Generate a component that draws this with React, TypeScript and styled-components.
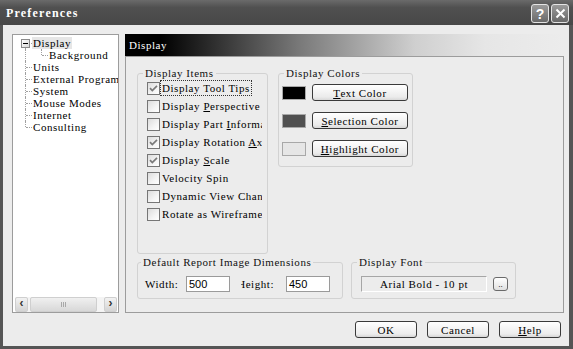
import React from "react";
import styled, { createGlobalStyle } from "styled-components";

const GlobalStyle = createGlobalStyle`
  html, body {
    margin: 0;
    padding: 0;
    background: #ffffff;
  }
  body {
    font-family: "Liberation Serif", "Times New Roman", serif;
    font-size: 11px;
    letter-spacing: 0.55px;
    color: #000;
  }
`;

const Colors = {
  frame: "#555555",
  face: "#ececec",
  groupLine: "#d2d2d2",
  panelLine: "#9c9c9c",
  treeLine: "#a0a0a0",
  buttonLine: "#3a3a3a",
};

interface CheckItem {
  id: string;
  label: React.ReactNode;
  checked?: boolean;
  focused?: boolean;
}

const displayItems: CheckItem[] = [
  { id: "tips", label: "Display Tool Tips", checked: true, focused: true },
  { id: "persp", label: <>Display <u>P</u>erspective</> },
  { id: "part", label: <>Display Part <u>I</u>nformation</> },
  { id: "axis", label: <>Display Rotation <u>A</u>xis</>, checked: true },
  { id: "scale", label: <>Display <u>S</u>cale</>, checked: true },
  { id: "spin", label: "Velocity Spin" },
  { id: "dyn", label: "Dynamic View Changes" },
  { id: "wire", label: "Rotate as Wireframe" },
];

const colorRows = [
  { id: "text", swatch: "#000000", label: <><u>T</u>ext Color</> },
  { id: "sel", swatch: "#505050", label: <><u>S</u>election Color</> },
  { id: "hi", swatch: "#e6e6e6", label: <><u>H</u>ighlight Color</> },
];

type Span = "full" | "first" | "last";

const treeRoots = ["Units", "External Program", "System", "Mouse Modes", "Internet"];

const CheckMark = () => (
  <svg width="11" height="11" viewBox="0 0 11 11">
    <path d="M2 5.2 L4.3 7.6 L9 2.8" fill="none" stroke="#7a7a7a" strokeWidth="1.7" />
  </svg>
);

const CloseGlyph = () => (
  <svg width="11" height="11" viewBox="0 0 11 11">
    <path d="M1.5 1.5 L9.5 9.5 M9.5 1.5 L1.5 9.5" stroke="#fff" strokeWidth="2" />
  </svg>
);

export default function App() {
  return (
    <>
      <GlobalStyle />
      <Window>
        <TitleBar>
          <Title>Preferences</Title>
          <CaptionButtons>
            <CaptionButton>?</CaptionButton>
            <CaptionButton>
              <CloseGlyph />
            </CaptionButton>
          </CaptionButtons>
        </TitleBar>

        <Client>
          <MainRow>
            <TreePanel>
              <TreeList>
                <TreeRow>
                  <Branch $span="last" $from="mid">
                    <Expander />
                  </Branch>
                  <TreeLabel $selected>Display</TreeLabel>
                </TreeRow>
                <TreeRow>
                  <Branch $span="full" $wide $noStub />
                  <Branch $span="first" />
                  <TreeLabel>Background</TreeLabel>
                </TreeRow>
                {treeRoots.map((name) => (
                  <TreeRow key={name}>
                    <Branch $span="full" />
                    <TreeLabel>{name}</TreeLabel>
                  </TreeRow>
                ))}
                <TreeRow>
                  <Branch $span="first" />
                  <TreeLabel>Consulting</TreeLabel>
                </TreeRow>
              </TreeList>
              <HScroll>
                <ScrollArrow>‹</ScrollArrow>
                <ScrollThumb>
                  <Grip />
                </ScrollThumb>
                <ScrollArrow>›</ScrollArrow>
              </HScroll>
            </TreePanel>

            <PagePanel>
              <PageHeader>Display</PageHeader>
              <PageBody>
                <TopGroups>
                  <Group $height={187}>
                    <Legend>Display Items</Legend>
                    <CheckList>
                      {displayItems.map((item) => (
                        <CheckRow key={item.id}>
                          <CheckBox>{item.checked && <CheckMark />}</CheckBox>
                          <CheckLabel $focused={item.focused}>{item.label}</CheckLabel>
                        </CheckRow>
                      ))}
                    </CheckList>
                  </Group>

                  <Group>
                    <Legend>Display Colors</Legend>
                    <ColorList>
                      {colorRows.map((row) => (
                        <ColorRow key={row.id}>
                          <Swatch $color={row.swatch} />
                          <ColorButton>{row.label}</ColorButton>
                        </ColorRow>
                      ))}
                    </ColorList>
                  </Group>
                </TopGroups>

                <BottomGroups>
                  <DimensionsGroup $height={43}>
                    <Legend>Default Report Image Dimensions</Legend>
                    <FieldRow>
                      <WidthLabel>Width:</WidthLabel>
                      <NumberBox>500</NumberBox>
                      <HeightLabel>
                        <span>Height:</span>
                      </HeightLabel>
                      <NumberBox>450</NumberBox>
                    </FieldRow>
                  </DimensionsGroup>

                  <FontGroup $height={43}>
                    <Legend>Display Font</Legend>
                    <FontRow>
                      <FontField>Arial Bold - 10 pt</FontField>
                      <BrowseButton>..</BrowseButton>
                    </FontRow>
                  </FontGroup>
                </BottomGroups>
              </PageBody>
            </PagePanel>
          </MainRow>

          <Footer>
            <DialogButton>OK</DialogButton>
            <DialogButton>Cancel</DialogButton>
            <DialogButton>
              <u>H</u>elp
            </DialogButton>
          </Footer>
        </Client>
      </Window>
    </>
  );
}

const Window = styled.div`
  width: 573px;
  height: 349px;
  display: flex;
  flex-direction: column;
  background: ${Colors.frame};
  overflow: hidden;
`;

const TitleBar = styled.div`
  height: 25px;
  flex: none;
  display: flex;
  align-items: center;
  justify-content: space-between;
  padding: 0 4px 0 6px;
  background: linear-gradient(to bottom, #6a6a6a 0%, #505050 30%, #474747 100%);
`;

const Title = styled.div`
  color: #fff;
  font-weight: bold;
  font-size: 12px;
  letter-spacing: 1.2px;
  padding-top: 2px;
`;

const CaptionButtons = styled.div`
  display: flex;
  gap: 2px;
  padding-top: 2px;
`;

const CaptionButton = styled.div`
  width: 16px;
  height: 17px;
  border: 1px solid #e4e4e4;
  border-radius: 3px;
  background: linear-gradient(to bottom, #9a9a9a, #6a6a6a);
  color: #fff;
  font-family: "Liberation Sans", Arial, sans-serif;
  font-weight: bold;
  font-size: 14px;
  letter-spacing: 0;
  display: flex;
  align-items: center;
  justify-content: center;
`;

const Client = styled.div`
  flex: 1;
  min-height: 0;
  margin: 0 4px 3px 3px;
  background: ${Colors.face};
  padding: 9px 5px 0 9px;
  display: flex;
  flex-direction: column;
`;

const MainRow = styled.div`
  display: flex;
  gap: 6px;
  height: 279px;
  flex: none;
`;

const TreePanel = styled.div`
  width: 105px;
  border: 1px solid ${Colors.panelLine};
  background: #fff;
  display: flex;
  flex-direction: column;
  overflow: hidden;
`;

const TreeList = styled.div`
  flex: 1;
  padding: 2px 0 0 12px;
  overflow: hidden;
`;

const TreeRow = styled.div`
  display: flex;
  height: 12px;
  line-height: 12px;
  white-space: nowrap;
`;

const Branch = styled.span<{ $span: Span; $from?: "mid"; $wide?: boolean; $noStub?: boolean }>`
  position: relative;
  flex: none;
  width: ${({ $wide }) => ($wide ? "16px" : "7px")};

  &::before {
    content: "";
    position: absolute;
    left: 0;
    top: ${({ $from }) => ($from === "mid" ? "6px" : "0")};
    bottom: ${({ $span }) => ($span === "first" ? "6px" : "0")};
    border-left: 1px dotted ${Colors.treeLine};
  }

  &::after {
    content: "";
    display: ${({ $noStub }) => ($noStub ? "none" : "block")};
    position: absolute;
    left: 1px;
    top: 6px;
    width: 6px;
    border-top: 1px dotted ${Colors.treeLine};
  }
`;

const Expander = styled.span`
  position: absolute;
  z-index: 1;
  left: -4px;
  top: 2px;
  width: 7px;
  height: 7px;
  border: 1px solid #8a8a8a;
  background: linear-gradient(135deg, #ffffff, #d8d8d8);

  &::after {
    content: "";
    position: absolute;
    left: 1px;
    right: 1px;
    top: 3px;
    border-top: 1px solid #000;
  }
`;

const TreeLabel = styled.span<{ $selected?: boolean }>`
  padding: 0 1px;
  background: ${({ $selected }) => ($selected ? "#e6e6e6" : "transparent")};
`;

const HScroll = styled.div`
  height: 15px;
  margin: 0 1px 0 2px;
  display: flex;
  align-items: center;
  gap: 2px;
  background: #f4f4f4;
`;

const ScrollArrow = styled.div`
  width: 11px;
  height: 13px;
  border: 1px solid #cfcfcf;
  border-radius: 2px;
  background: linear-gradient(to bottom, #f2f2f2, #d4d4d4);
  font-family: "Liberation Sans", Arial, sans-serif;
  font-weight: bold;
  font-size: 12px;
  line-height: 11px;
  letter-spacing: 0;
  color: #333;
  display: flex;
  justify-content: center;
`;

const ScrollThumb = styled.div`
  width: 66px;
  height: 13px;
  margin-right: 5px;
  border: 1px solid #cfcfcf;
  border-radius: 2px;
  background: linear-gradient(to bottom, #f0f0f0, #d8d8d8);
  display: flex;
  align-items: center;
  justify-content: center;
`;

const Grip = styled.span`
  width: 5px;
  height: 5px;
  background: repeating-linear-gradient(to right, #a8a8a8 0 1px, transparent 1px 2px);
`;

const PagePanel = styled.div`
  width: 439px;
  display: flex;
  flex-direction: column;
`;

const PageHeader = styled.div`
  height: 22px;
  flex: none;
  padding-left: 4px;
  line-height: 23px;
  color: #fff;
  background: linear-gradient(
    to right,
    #000 0%,
    #000 8%,
    #7a7a7a 40%,
    #cfcfcf 66%,
    #e6e6e6 82%,
    ${Colors.face} 100%
  );
`;

const PageBody = styled.div`
  flex: 1;
  min-height: 0;
  border: 1px solid ${Colors.panelLine};
  padding: 10px 0 0 11px;
  display: flex;
  flex-direction: column;
  gap: 2px;
`;

const TopGroups = styled.div`
  display: grid;
  grid-template-columns: 131px 135px;
  column-gap: 10px;
  align-items: start;
`;

const Group = styled.fieldset<{ $height?: number }>`
  margin: 0;
  padding: 0 4px 0 9px;
  min-width: 0;
  box-sizing: border-box;
  height: ${({ $height }) => ($height ? `${$height}px` : "auto")};
  border: 1px solid ${Colors.groupLine};
  border-radius: 3px;
`;

const Legend = styled.legend`
  padding: 0 2px;
  margin-left: -4px;
  line-height: 12px;
  color: #111;
`;

const CheckList = styled.div`
  display: flex;
  flex-direction: column;
`;

const CheckRow = styled.div`
  display: flex;
  align-items: center;
  height: 18px;
`;

const CheckBox = styled.span`
  flex: none;
  width: 11px;
  height: 11px;
  border: 1px solid #767676;
  background: linear-gradient(135deg, #dcdcdc 0%, #f4f4f4 60%, #ffffff 100%);
  display: flex;
  align-items: center;
  justify-content: center;
`;

const CheckLabel = styled.span<{ $focused?: boolean }>`
  padding: 0 1px;
  line-height: 14px;
  white-space: nowrap;
  overflow: hidden;
  border: 1px dotted ${({ $focused }) => ($focused ? "#333" : "transparent")};
`;

const ColorList = styled.div`
  display: flex;
  flex-direction: column;
  gap: 11px;
  padding: 5px 0 9px;
  margin-left: -6px;
`;

const ColorRow = styled.div`
  display: flex;
  align-items: center;
  gap: 6px;
`;

const Swatch = styled.span<{ $color: string }>`
  width: 22px;
  height: 12px;
  border: 1px solid #a8a8a8;
  background: ${({ $color }) => $color};
`;

const ColorButton = styled.div`
  width: 95px;
  height: 15px;
  border: 1px solid ${Colors.buttonLine};
  border-radius: 3px;
  background: linear-gradient(to bottom, #ffffff, #ebebeb 80%, #d8d8d8);
  display: flex;
  align-items: center;
  justify-content: center;
`;

const BottomGroups = styled.div`
  display: flex;
  gap: 8px;
`;

const DimensionsGroup = styled(Group)`
  width: 206px;
  padding-left: 7px;
`;

const FontGroup = styled(Group)`
  width: 165px;
`;

const FieldRow = styled.div`
  display: flex;
  align-items: center;
  padding-top: 8px;
`;

const WidthLabel = styled.span`
  width: 41px;
  flex: none;
`;

const HeightLabel = styled.span`
  width: 33px;
  margin: 0 12px 0 11px;
  flex: none;
  display: flex;
  justify-content: flex-end;
  overflow: hidden;
  white-space: nowrap;
`;

const NumberBox = styled.div`
  width: 40px;
  height: 14px;
  padding-left: 2px;
  border: 1px solid #9a9a9a;
  background: #fff;
  font-family: "Liberation Sans", Arial, sans-serif;
  font-size: 11px;
  letter-spacing: 0;
  line-height: 14px;
`;

const FontRow = styled.div`
  display: flex;
  align-items: center;
  gap: 6px;
  padding-top: 8px;
`;

const FontField = styled.div`
  width: 124px;
  height: 14px;
  line-height: 14px;
  text-align: center;
  border: 1px solid;
  border-color: #a6a6a6 #ffffff #ffffff #a6a6a6;
  background: ${Colors.face};
`;

const BrowseButton = styled.div`
  width: 13px;
  height: 12px;
  border: 1px solid #6a6a6a;
  border-radius: 3px;
  background: linear-gradient(to bottom, #ffffff, #e0e0e0);
  font-size: 9px;
  line-height: 12px;
  letter-spacing: 0;
  text-align: center;
`;

const Footer = styled.div`
  display: flex;
  justify-content: flex-end;
  gap: 10px;
  padding: 8px 3px 0 0;
`;

const DialogButton = styled.div`
  width: 60px;
  height: 15px;
  border: 1px solid ${Colors.buttonLine};
  border-radius: 3px;
  background: linear-gradient(to bottom, #ffffff, #ececec 80%, #d6d6d6);
  display: flex;
  align-items: center;
  justify-content: center;
`;
